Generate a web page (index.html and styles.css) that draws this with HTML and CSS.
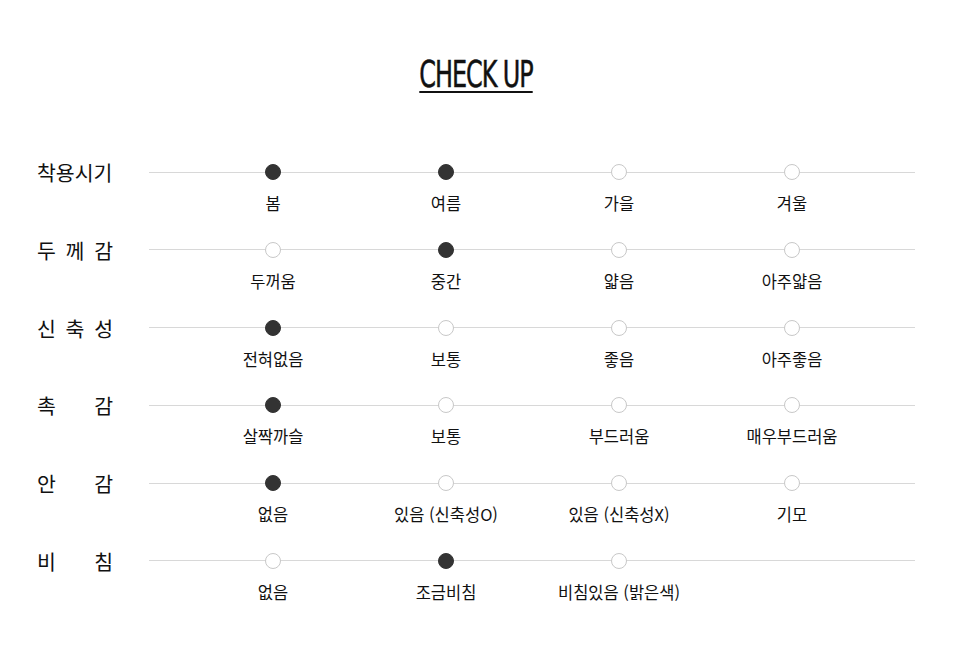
FILE: index.html
```html
<!DOCTYPE html>
<html lang="ko">
<head>
<meta charset="utf-8">
<link rel="stylesheet" href="styles.css">
</head>
<body>
<div class="wrap">
  <div class="title-box"><h1 class="title">CHECK UP</h1></div>
  <div class="chart">
    <div class="row">
      <div class="label">착용시기</div>
      <div class="opts">
        <div class="opt"><span class="dot on"></span><span class="txt">봄</span></div>
        <div class="opt"><span class="dot on"></span><span class="txt">여름</span></div>
        <div class="opt"><span class="dot"></span><span class="txt">가을</span></div>
        <div class="opt"><span class="dot"></span><span class="txt">겨울</span></div>
      </div>
    </div>
    <div class="row">
      <div class="label">두 께 감</div>
      <div class="opts">
        <div class="opt"><span class="dot"></span><span class="txt">두꺼움</span></div>
        <div class="opt"><span class="dot on"></span><span class="txt">중간</span></div>
        <div class="opt"><span class="dot"></span><span class="txt">얇음</span></div>
        <div class="opt"><span class="dot"></span><span class="txt">아주얇음</span></div>
      </div>
    </div>
    <div class="row">
      <div class="label">신 축 성</div>
      <div class="opts">
        <div class="opt"><span class="dot on"></span><span class="txt">전혀없음</span></div>
        <div class="opt"><span class="dot"></span><span class="txt">보통</span></div>
        <div class="opt"><span class="dot"></span><span class="txt">좋음</span></div>
        <div class="opt"><span class="dot"></span><span class="txt">아주좋음</span></div>
      </div>
    </div>
    <div class="row">
      <div class="label">촉 감</div>
      <div class="opts">
        <div class="opt"><span class="dot on"></span><span class="txt">살짝까슬</span></div>
        <div class="opt"><span class="dot"></span><span class="txt">보통</span></div>
        <div class="opt"><span class="dot"></span><span class="txt">부드러움</span></div>
        <div class="opt"><span class="dot"></span><span class="txt">매우부드러움</span></div>
      </div>
    </div>
    <div class="row">
      <div class="label">안 감</div>
      <div class="opts">
        <div class="opt"><span class="dot on"></span><span class="txt">없음</span></div>
        <div class="opt"><span class="dot"></span><span class="txt">있음 (신축성O)</span></div>
        <div class="opt"><span class="dot"></span><span class="txt">있음 (신축성X)</span></div>
        <div class="opt"><span class="dot"></span><span class="txt">기모</span></div>
      </div>
    </div>
    <div class="row">
      <div class="label">비 침</div>
      <div class="opts">
        <div class="opt"><span class="dot"></span><span class="txt">없음</span></div>
        <div class="opt"><span class="dot on"></span><span class="txt">조금비침</span></div>
        <div class="opt"><span class="dot"></span><span class="txt">비침있음 (밝은색)</span></div>
        <div class="opt empty"></div>
      </div>
    </div>
  </div>
</div>
</body>
</html>
```

FILE: styles.css
```css
* { box-sizing: border-box; }
html, body { margin: 0; padding: 0; background: #fff; }
body {
  font-family: "Noto Sans CJK KR", "Noto Sans", sans-serif;
  color: #111;
}
.wrap {
  width: 915px;
  padding-left: 37px;
  padding-top: 56px;
}
.title-box {
  display: flex;
  justify-content: center;
  height: 108px;
}
.title {
  margin: 0;
  font-family: "DejaVu Sans Condensed", "DejaVu Sans", sans-serif;
  font-weight: normal;
  font-size: 38px;
  line-height: 36px;
  height: 37px;
  color: #111;
  letter-spacing: -1.5px;
  border-bottom: 2px solid #111;
  transform: scaleX(0.7);
  transform-origin: center top;
  -webkit-text-stroke: 0.5px #111;
}
.chart { display: flex; flex-direction: column; }
.row {
  display: flex;
  height: 77.8px;
}
.label {
  width: 112px;
  padding-right: 36px;
  font-size: 20.5px;
  line-height: 16px;
  height: 16px;
  text-align: justify;
  text-align-last: justify;
  color: #111;
}
.opts {
  width: 766px;
  display: grid;
  grid-template-columns: repeat(4, 173px);
  padding-left: 37.5px;
  background: linear-gradient(#d8d8d8, #d8d8d8) 0 7.5px / 100% 1px no-repeat;
}
.opt {
  display: flex;
  flex-direction: column;
  align-items: center;
}
.dot {
  width: 16px;
  height: 16px;
  border-radius: 50%;
  border: 1px solid #c8c8c8;
  background: #fff;
}
.dot.on {
  background: #333;
  border-color: #333;
}
.txt {
  margin-top: 12px;
  font-size: 16.5px;
  line-height: 22px;
  white-space: nowrap;
  color: #111;
}
```
